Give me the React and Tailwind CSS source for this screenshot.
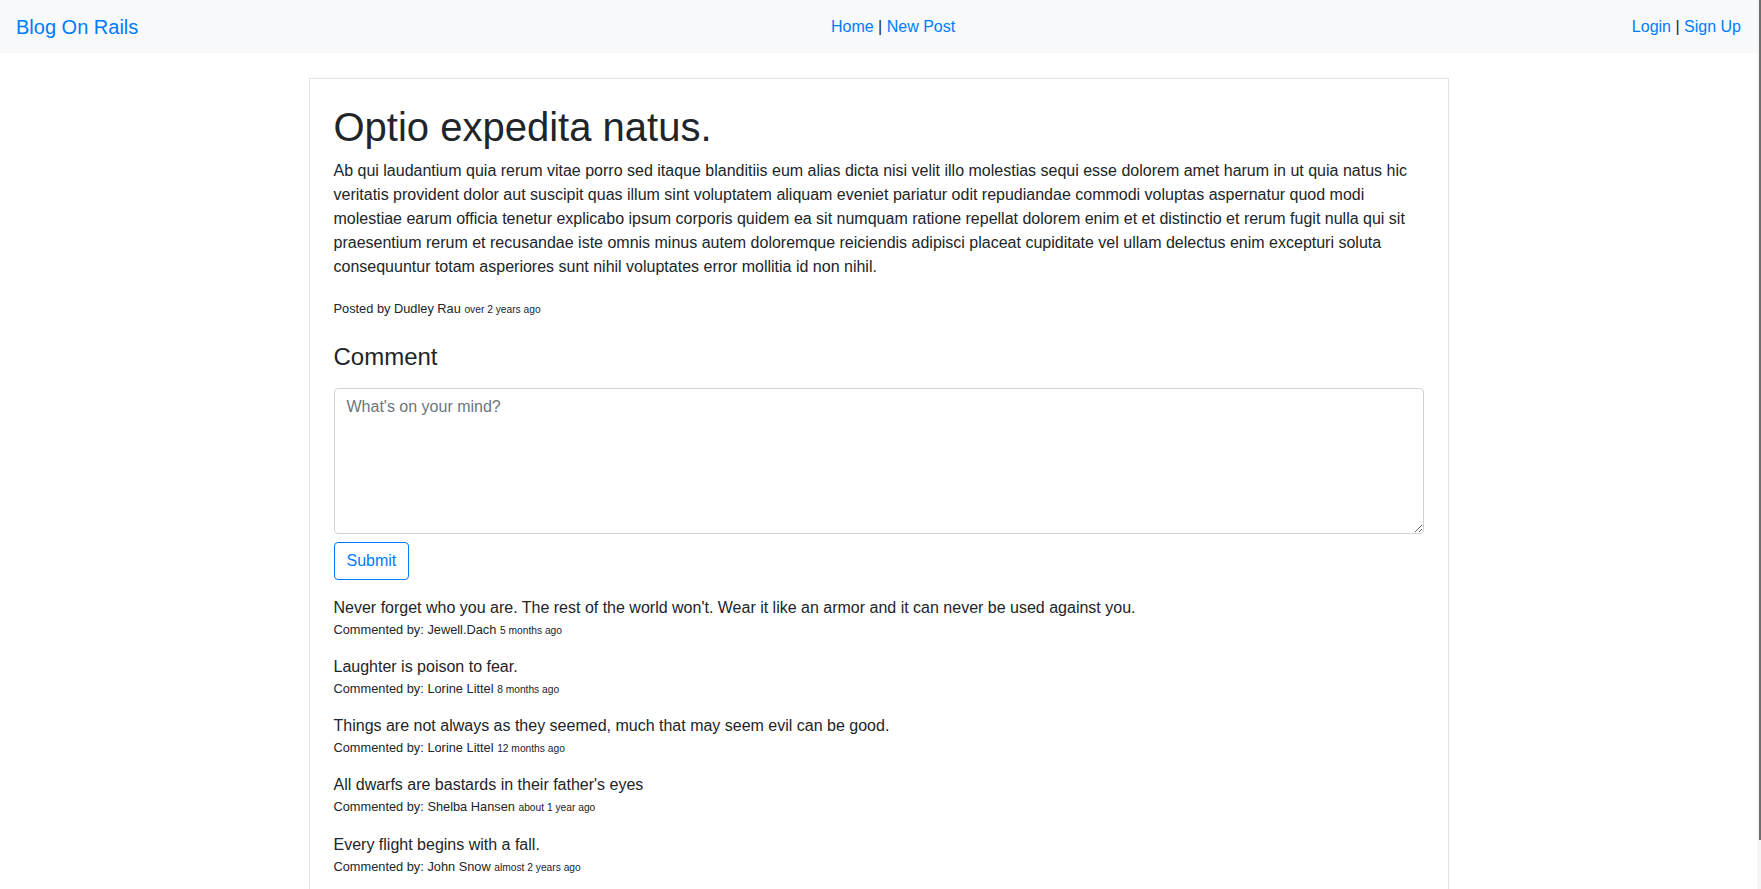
import React from 'react';

const comments = [
  { body: "Never forget who you are. The rest of the world won't. Wear it like an armor and it can never be used against you.", author: 'Jewell.Dach', ago: '5 months ago' },
  { body: 'Laughter is poison to fear.', author: 'Lorine Littel', ago: '8 months ago' },
  { body: 'Things are not always as they seemed, much that may seem evil can be good.', author: 'Lorine Littel', ago: '12 months ago' },
  { body: "All dwarfs are bastards in their father's eyes", author: 'Shelba Hansen', ago: 'about 1 year ago' },
  { body: 'Every flight begins with a fall.', author: 'John Snow', ago: 'almost 2 years ago' },
];

const postBody =
  'Ab qui laudantium quia rerum vitae porro sed itaque blanditiis eum alias dicta nisi velit illo molestias sequi esse dolorem amet harum in ut quia natus hic veritatis provident dolor aut suscipit quas illum sint voluptatem aliquam eveniet pariatur odit repudiandae commodi voluptas aspernatur quod modi molestiae earum officia tenetur explicabo ipsum corporis quidem ea sit numquam ratione repellat dolorem enim et et distinctio et rerum fugit nulla qui sit praesentium rerum et recusandae iste omnis minus autem doloremque reiciendis adipisci placeat cupiditate vel ullam delectus enim excepturi soluta consequuntur totam asperiores sunt nihil voluptates error mollitia id non nihil.';

const App = () => {
  return (
    <div className="flex h-[889px] overflow-hidden bg-white text-[#212529] font-['Liberation_Sans',Arial,sans-serif]">
      <div className="flex-1 flex flex-col min-w-0">
        {/* Navbar */}
        <nav className="h-[53px] shrink-0 bg-[#f8f9fa] px-4 flex items-center justify-between">
          <a href="#" className="text-[20px] leading-[30px] text-[#007bff] mr-4">Blog On Rails</a>
          <div className="text-[16px] leading-6">
            <a href="#" className="text-[#007bff]">Home</a> | <a href="#" className="text-[#007bff]">New Post</a>
          </div>
          <div className="text-[16px] leading-6">
            <a href="#" className="text-[#007bff]">Login</a> | <a href="#" className="text-[#007bff]">Sign Up</a>
          </div>
        </nav>

        {/* Post card */}
        <div className="w-[1140px] mx-auto mt-[25px] border border-[#dee2e6] p-6 shrink-0">
          <h1 className="text-[40px] leading-[48px] font-normal mb-2">Optio expedita natus.</h1>
          <p className="text-[16px] leading-6 mb-[17px]">{postBody}</p>
          <p className="text-[16px] leading-6">
            <small className="text-[12.8px]">
              Posted by Dudley Rau <small className="text-[10.24px] leading-none">over 2 years ago</small>
            </small>
          </p>

          {/* Comment form */}
          <h4 className="text-[24px] leading-[28.8px] font-normal mt-[22px] mb-4">Comment</h4>
          <textarea
            className="block w-full h-[146px] border border-[#ced4da] rounded-[4px] px-3 py-[6px] text-[16px] leading-6 placeholder:text-[#6c757d] outline-none"
            placeholder="What's on your mind?"
          />
          <button className="mt-2 h-[38px] px-3 border border-[#007bff] rounded-[4px] text-[#007bff] text-[16px] leading-6 bg-white">
            Submit
          </button>

          {/* Comments */}
          <div className="mt-4 flex flex-col">
            {comments.map((c, i) => (
              <div key={i} className="mb-4">
                <div className="text-[16px] leading-6">{c.body}</div>
                <div className="text-[12.8px] leading-[19.2px] h-[19.2px]">
                  Commented by: {c.author} <small className="text-[10.24px] leading-none">{c.ago}</small>
                </div>
              </div>
            ))}
          </div>
        </div>
      </div>
      {/* scrollbar strip */}
      <div className="w-[4px] shrink-0 bg-[#f5f5f5] flex justify-end">
        <div className="w-[2px] h-[840px] bg-[#6e6e6e]" />
      </div>
    </div>
  );
};

export default App;
